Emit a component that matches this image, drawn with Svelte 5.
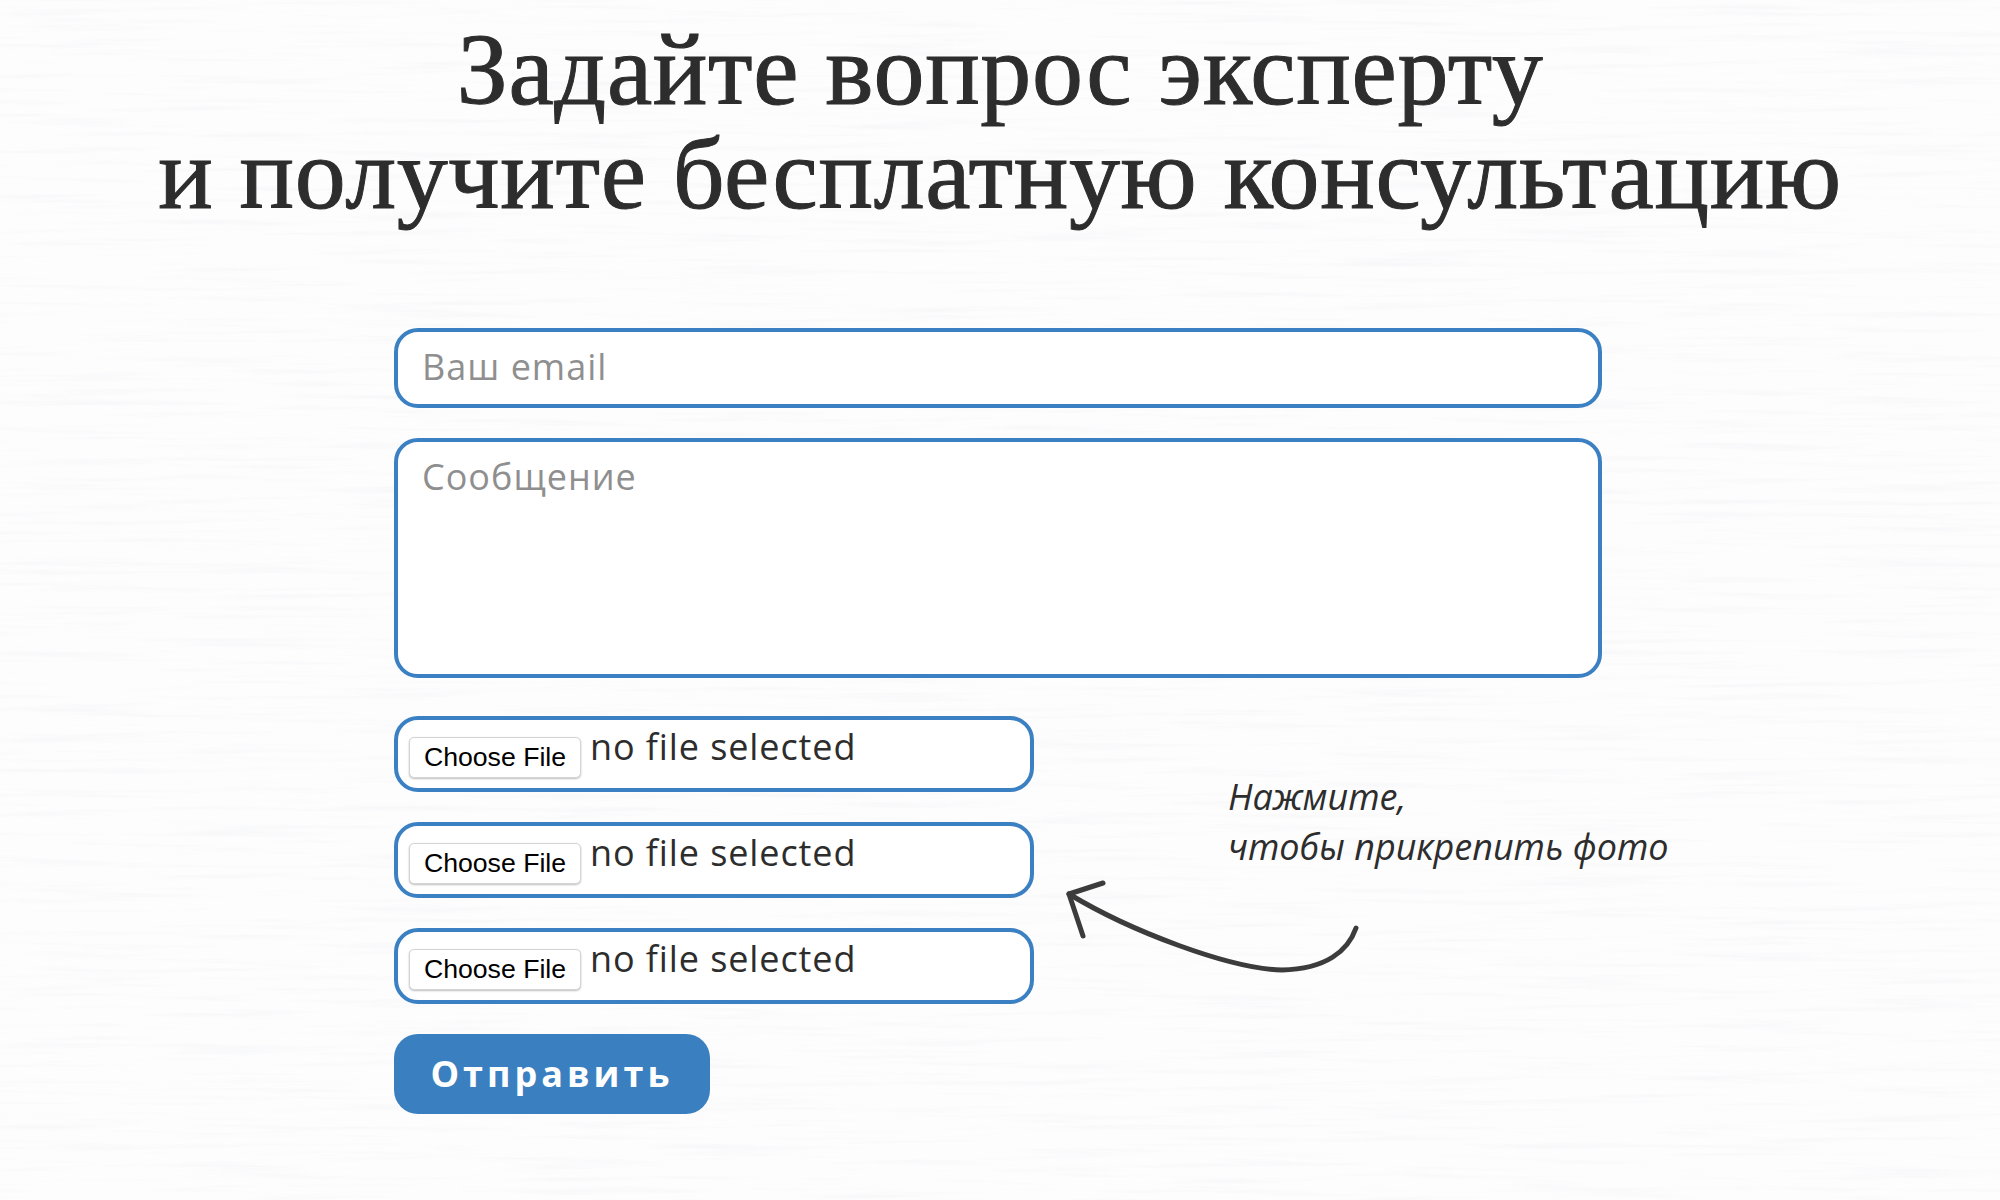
<script>
  const rows = [1, 2, 3];
</script>

<svg class="texture" width="2000" height="1200" aria-hidden="true">
  <defs>
    <filter id="wood" x="0" y="0" width="100%" height="100%">
      <feTurbulence type="fractalNoise" baseFrequency="0.006 0.16" numOctaves="4" seed="7" />
      <feColorMatrix type="matrix" values="0 0 0 0 0.35  0 0 0 0 0.37  0 0 0 0 0.42  2 0 0 0 -1.02" />
    </filter>
  </defs>
  <rect width="2000" height="1200" filter="url(#wood)" opacity="0.08" />
</svg>

<main class="page">
  <h1>Задайте вопрос эксперту<br />и получите бесплатную консультацию</h1>
  <form class="form">
    <input class="field email" type="text" placeholder="Ваш email" />
    <textarea class="field area" placeholder="Сообщение"></textarea>
    <div class="files-row">
      <div class="files">
        {#each rows as r (r)}
          <div class="file">
            <button type="button" class="choose">Choose File</button>
            <span class="none">no file selected</span>
          </div>
        {/each}
      </div>
      <div class="note">
        <p>Нажмите,<br />чтобы прикрепить фото</p>
        <svg class="arrow" width="310" height="100" viewBox="1060 875 310 100" aria-hidden="true">
          <path d="M1356 927C1348 950 1326 968 1282 969C1230 968 1130 930 1069 893" />
          <path d="M1103 882L1069 893L1083 935" />
        </svg>
      </div>
    </div>
    <button type="button" class="send">Отправить</button>
  </form>
</main>

<style>
  :global(body) {
    margin: 0;
    background: #fdfdfe;
  }
  .texture {
    position: absolute;
    left: 0;
    top: 0;
    z-index: -1;
  }
  .page {
    width: 2000px;
    height: 1200px;
    overflow: hidden;
  }
  h1 {
    margin: 0;
    padding-top: 18px;
    font: 400 102px/104px "Liberation Serif", serif;
    letter-spacing: 0.65px;
    -webkit-text-stroke: 1px #2d2d2d;
    color: #2d2d2d;
    text-align: center;
  }
  .form {
    display: flex;
    flex-direction: column;
    align-items: flex-start;
    margin: 102px 0 0 394px;
    width: 1208px;
  }
  .field {
    box-sizing: border-box;
    width: 100%;
    height: 80px;
    padding: 0 24px;
    border: 4px solid #3a80c2;
    border-radius: 24px;
    background: #fff;
    font: 400 36px "Open Sans", sans-serif;
    letter-spacing: 1px;
    color: #333;
    outline: none;
  }
  .field::placeholder {
    color: #8f8f8f;
    opacity: 1;
  }
  .email {
    padding-bottom: 4px;
  }
  .area {
    display: block;
    height: 240px;
    margin-top: 30px;
    padding-top: 10px;
    resize: none;
  }
  .files-row {
    display: flex;
    margin-top: 38px;
  }
  .files {
    display: flex;
    flex-direction: column;
    gap: 30px;
    width: 640px;
  }
  .file {
    box-sizing: border-box;
    display: flex;
    align-items: flex-start;
    height: 76px;
    padding: 17px 11px 0;
    border: 4px solid #3a80c2;
    border-radius: 24px;
    background: #fff;
  }
  .choose {
    box-sizing: border-box;
    width: 172px;
    height: 41px;
    padding: 0;
    border: 1px solid #d4d4d4;
    border-radius: 5px;
    background: #fff;
    box-shadow: 0 1px 2px rgba(0, 0, 0, 0.25);
    font: 400 26.67px "Liberation Sans", sans-serif;
    color: #000;
  }
  .none {
    margin: -15px 0 0 9px;
    font: 400 36px/50px "Open Sans", sans-serif;
    letter-spacing: 0.9px;
    color: #2d2d2d;
  }
  .note {
    margin-left: 26px;
  }
  .note p {
    margin: 56px 0 0 168px;
    font: italic 400 36px/50px "Open Sans", sans-serif;
    letter-spacing: -0.05px;
    color: #2d2d2d;
    white-space: nowrap;
  }
  .arrow {
    display: block;
    margin-top: 4px;
  }
  .arrow path {
    fill: none;
    stroke: #3c3c3c;
    stroke-width: 5;
    stroke-linecap: round;
    stroke-linejoin: round;
  }
  .send {
    width: 316px;
    height: 80px;
    margin-top: 30px;
    padding: 0 0 2px;
    border: 0;
    border-radius: 24px;
    background: #3a7fc0;
    color: #fff;
    font: 700 36px "Open Sans", sans-serif;
    letter-spacing: 4px;
  }
</style>
